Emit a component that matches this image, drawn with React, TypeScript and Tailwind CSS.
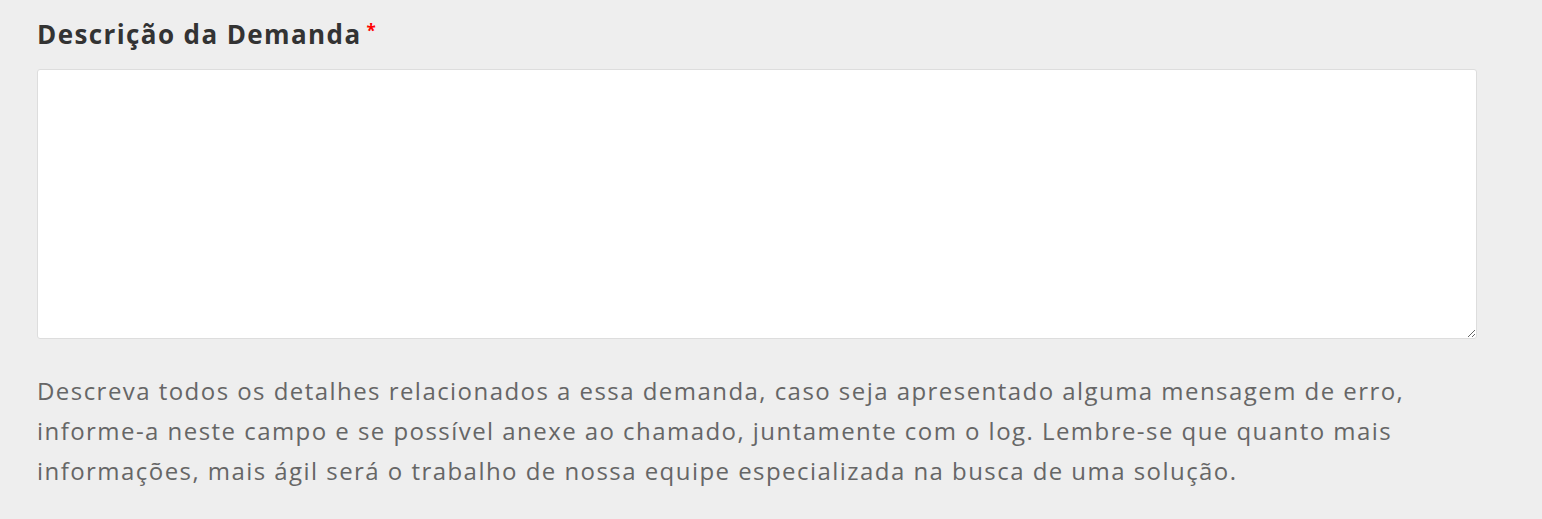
import React from 'react';

export default function App() {
  return (
    <div className="min-h-[519px] w-full bg-[#eeeeee] pl-[37px] pt-[14px] font-['Open_Sans','Noto_Sans',sans-serif]">
      <div className="w-[1440px]">
        <label className="flex items-start text-[26px] font-bold leading-[40px] tracking-[1.4px] text-[#333333]">
          Descrição da Demanda
          <span className="ml-[5px] text-[17px] leading-[34px] text-[#ff0000]">*</span>
        </label>
        <textarea className="mt-[15px] block h-[270px] w-[1440px] resize-y rounded-[3px] border border-[#dddddd] bg-white px-3 py-2 text-[20px] text-[#333] outline-none" />
        <p className="mt-[32px] text-[24px] leading-[40px] tracking-[1.45px] text-[#666666]">
          Descreva todos os detalhes relacionados a essa demanda, caso seja apresentado alguma mensagem de erro,
          <br />
          informe-a neste campo e se possível anexe ao chamado, juntamente com o log. Lembre-se que quanto mais
          <br />
          informações, mais ágil será o trabalho de nossa equipe especializada na busca de uma solução.
        </p>
      </div>
    </div>
  );
}
